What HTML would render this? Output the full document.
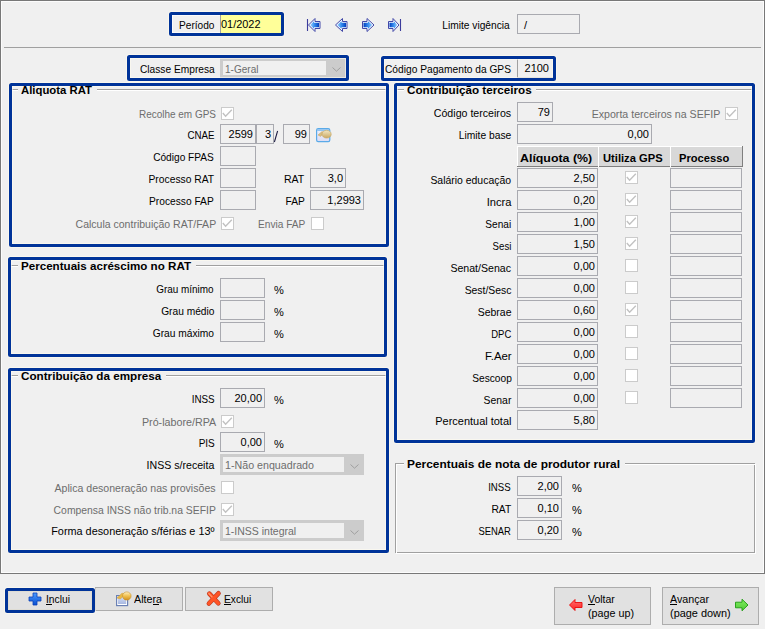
<!DOCTYPE html><html><head><meta charset="utf-8"><style>
html,body{margin:0;padding:0}
body{width:765px;height:629px;background:#f0f0f0;position:relative;overflow:hidden;font-family:"Liberation Sans",sans-serif;font-size:11px}
.a{position:absolute;box-sizing:border-box}
.t{position:absolute;font-size:11px;line-height:13px;white-space:nowrap;color:#000}
.b{font-weight:bold}
.f{position:absolute;box-sizing:border-box;border:1px solid #a9aab0;background:#f0f0f0}
.cb{position:absolute;box-sizing:border-box;width:13px;height:13px;border:1px solid #cbcbcb;background:#fff}
.bl{position:absolute;box-sizing:border-box;border:3px solid #003399;border-radius:2.5px;box-shadow:inset 0 0 0 1px rgba(255,252,238,0.6),0 0 0 1px rgba(255,252,238,0.6)}
.cmb{position:absolute;box-sizing:border-box;background:#cccccc}
.btn{position:absolute;box-sizing:border-box;border:1px solid #adadad;background:#e1e1e1}
</style></head><body>
<div class="a" style="left:0;top:0;width:765px;height:574px;border:1px solid #787878;box-shadow:inset 0 0 0 1px #fcfcfc"></div>
<div class="a" style="left:4px;top:47px;width:757px;height:1px;background:#a0a0a0"></div>
<div class="a" style="left:172px;top:15px;width:48px;height:1px;background:rgba(255,255,255,0.7)"></div>
<div class="a" style="left:172px;top:32px;width:48px;height:1px;background:rgba(255,255,255,0.7)"></div>
<div class="a" style="left:172px;top:15px;width:1px;height:18px;background:rgba(255,255,255,0.7)"></div>
<div class="t" style="top:19px;color:#000;left:178.50px;transform-origin:0 0;transform:scaleX(0.9213);">Período</div>
<div class="a" style="left:220px;top:15px;width:61px;height:18px;background:#ffff99;border-left:1px solid #a0a0a0"></div>
<div class="t" style="top:18px;color:#000;left:221.00px;transform-origin:0 0;transform:scaleX(0.9933);">01/2022</div>
<svg class="a" style="left:0;top:0" width="420" height="40">
<defs><linearGradient id="nl" x1="0" y1="0" x2="1" y2="0"><stop offset="0" stop-color="#9fd4ff"/><stop offset="0.45" stop-color="#3a90f0"/><stop offset="1" stop-color="#0040c0"/></linearGradient>
<linearGradient id="nr" x1="1" y1="0" x2="0" y2="0"><stop offset="0" stop-color="#9fd4ff"/><stop offset="0.45" stop-color="#3a90f0"/><stop offset="1" stop-color="#0040c0"/></linearGradient></defs>
<g stroke="#4248a8" stroke-width="1" fill="#f4f8ff" stroke-linejoin="round">
<path d="M308.5 25 L315 18.5 L315 21.5 L320 21.5 L320 28.5 L315 28.5 L315 31.5 Z"/>
<path d="M335.5 25 L342.5 18.5 L342.5 21.5 L347 21.5 L347 28.5 L342.5 28.5 L342.5 31.5 Z"/>
<path d="M374 25 L367 18.5 L367 21.5 L362.5 21.5 L362.5 28.5 L367 28.5 L367 31.5 Z"/>
<path d="M399 25 L393 18.5 L393 21.5 L388.5 21.5 L388.5 28.5 L393 28.5 L393 31.5 Z"/>
</g>
<g stroke="none">
<path fill="url(#nl)" d="M310.2 25 L314 21.3 L314 22.8 L319 22.8 L319 27.2 L314 27.2 L314 28.7 Z"/>
<path fill="url(#nl)" d="M337.2 25 L341.5 21.3 L341.5 22.8 L346 22.8 L346 27.2 L341.5 27.2 L341.5 28.7 Z"/>
<path fill="url(#nr)" d="M372.3 25 L368 21.3 L368 22.8 L363.5 22.8 L363.5 27.2 L368 27.2 L368 28.7 Z"/>
<path fill="url(#nr)" d="M397.3 25 L394 21.3 L394 22.8 L389.5 22.8 L389.5 27.2 L394 27.2 L394 28.7 Z"/>
</g>
<path d="M307.5 19 V31 M400.5 19 V31" stroke="#3c3c9c" stroke-width="1.1"/>
</svg>
<div class="t" style="top:19px;color:#000;right:255.00px;transform-origin:100% 0;transform:scaleX(0.9276);">Limite vigência</div>
<div class="f" style="left:517px;top:14px;width:63px;height:20px;"></div>
<div class="t" style="top:19px;color:#000;left:524.00px;transform-origin:0 0;">/</div>
<div class="t" style="top:63px;color:#000;right:550.70px;transform-origin:100% 0;transform:scaleX(0.9256);">Classe Empresa</div>
<div class="cmb" style="left:220px;top:58px;width:126px;height:20px"></div>
<div class="a" style="left:223px;top:61px;width:103px;height:14px;background:#f0f0f0"></div>
<div class="t" style="top:63px;color:#6d6d6d;left:225.00px;transform-origin:0 0;transform:scaleX(0.9131);">1-Geral</div>
<svg class="a" style="left:331px;top:66px" width="11" height="7"><path d="M1.5 1.5 L5.5 5.2 L9.5 1.5" stroke="#a0a0a0" stroke-width="1" fill="none"/></svg>
<div class="t" style="top:63px;color:#000;left:385.00px;transform-origin:0 0;transform:scaleX(0.9281);">Código Pagamento da GPS</div>
<div class="a" style="left:517px;top:59px;width:36px;height:19px;border-left:1px solid #a0a0a0;border-bottom:1px solid #c0c0c0"></div>
<div class="t" style="top:62px;color:#000;right:216.00px;transform-origin:100% 0;">2100</div>
<div class="a" style="left:12px;top:89px;width:6px;height:1px;background:#a0a0a0"></div>
<div class="a" style="left:12px;top:90px;width:6px;height:1px;background:#ffffff"></div>
<div class="a" style="left:97px;top:89px;width:289px;height:1px;background:#a0a0a0"></div>
<div class="a" style="left:97px;top:90px;width:289px;height:1px;background:#ffffff"></div>
<div class="t" style="top:108px;color:#6d6d6d;right:549.00px;transform-origin:100% 0;transform:scaleX(0.9060);">Recolhe em GPS</div>
<div class="cb" style="left:221px;top:107px"></div>
<svg class="a" style="left:221px;top:107px" width="13" height="13"><path d="M1.8 6 L4.6 9.2 L10.8 2.8" stroke="#c2c2c2" stroke-width="1.4" fill="none"/></svg>
<div class="t" style="top:129px;color:#000;right:550.50px;transform-origin:100% 0;transform:scaleX(0.8834);">CNAE</div>
<div class="f" style="left:220px;top:124px;width:36px;height:20px;"></div>
<div class="t" style="top:128px;color:#000;right:512.00px;transform-origin:100% 0;">2599</div>
<div class="f" style="left:256px;top:124px;width:18px;height:20px;"></div>
<div class="t" style="top:128px;color:#000;right:494.00px;transform-origin:100% 0;">3</div>
<svg class="a" style="left:270px;top:126px" width="14" height="20"><path d="M7.6 5 L4.4 16" stroke="#1a1a40" stroke-width="1.05"/></svg>
<div class="f" style="left:283px;top:124px;width:27px;height:20px;"></div>
<div class="t" style="top:128px;color:#000;right:458.00px;transform-origin:100% 0;">99</div>
<svg class="a" style="left:310px;top:122px" width="26" height="24">
<defs><linearGradient id="wg" x1="0" y1="0" x2="0" y2="1"><stop offset="0" stop-color="#f0f2fc"/><stop offset="1" stop-color="#dcdcf4"/></linearGradient>
<linearGradient id="hg" x1="0" y1="0" x2="0" y2="1"><stop offset="0" stop-color="#f2e6c4"/><stop offset="1" stop-color="#caa860"/></linearGradient></defs>
<rect x="6.6" y="6.6" width="13.2" height="13" rx="1.6" fill="url(#wg)" stroke="#5aaae8" stroke-width="1.2"/>
<rect x="7.2" y="7.4" width="12" height="1.4" fill="#7ab8ee"/>
<path d="M8 13 L12 9.6 L14 10.4 L10.6 14.4 Z" fill="#d8bd82" stroke="#c4a460" stroke-width="0.5"/>
<ellipse cx="16.6" cy="12.2" rx="4.6" ry="3.9" fill="url(#hg)" stroke="#c8a45c" stroke-width="0.6"/>
</svg>
<div class="t" style="top:151px;color:#000;right:551.00px;transform-origin:100% 0;transform:scaleX(0.9221);">Código FPAS</div>
<div class="f" style="left:220px;top:146px;width:36px;height:20px;"></div>
<div class="t" style="top:173px;color:#000;right:551.00px;transform-origin:100% 0;transform:scaleX(0.9359);">Processo RAT</div>
<div class="f" style="left:220px;top:168px;width:36px;height:20px;"></div>
<div class="t" style="top:173px;color:#000;right:460.40px;transform-origin:100% 0;transform:scaleX(0.9581);">RAT</div>
<div class="f" style="left:310px;top:168px;width:36px;height:20px;"></div>
<div class="t" style="top:172px;color:#000;right:422.00px;transform-origin:100% 0;">3,0</div>
<div class="t" style="top:195px;color:#000;right:551.00px;transform-origin:100% 0;transform:scaleX(0.9282);">Processo FAP</div>
<div class="f" style="left:220px;top:190px;width:36px;height:20px;"></div>
<div class="t" style="top:195px;color:#000;right:460.40px;transform-origin:100% 0;transform:scaleX(0.9280);">FAP</div>
<div class="f" style="left:310px;top:190px;width:54px;height:20px;"></div>
<div class="t" style="top:194px;color:#000;right:404.00px;transform-origin:100% 0;">1,2993</div>
<div class="t" style="top:218px;color:#6d6d6d;right:548.80px;transform-origin:100% 0;transform:scaleX(0.9555);">Calcula contribuição RAT/FAP</div>
<div class="cb" style="left:221px;top:217px"></div>
<svg class="a" style="left:221px;top:217px" width="13" height="13"><path d="M1.8 6 L4.6 9.2 L10.8 2.8" stroke="#c2c2c2" stroke-width="1.4" fill="none"/></svg>
<div class="t" style="top:218px;color:#6d6d6d;right:459.20px;transform-origin:100% 0;transform:scaleX(0.9210);">Envia FAP</div>
<div class="cb" style="left:311px;top:217px"></div>
<div class="a" style="left:11px;top:265px;width:7px;height:1px;background:#a0a0a0"></div>
<div class="a" style="left:11px;top:266px;width:7px;height:1px;background:#ffffff"></div>
<div class="a" style="left:196px;top:265px;width:188px;height:1px;background:#a0a0a0"></div>
<div class="a" style="left:196px;top:266px;width:188px;height:1px;background:#ffffff"></div>
<div class="t" style="top:283px;color:#000;right:551.00px;transform-origin:100% 0;transform:scaleX(0.9013);">Grau mínimo</div>
<div class="f" style="left:220px;top:278px;width:45px;height:20px;"></div>
<div class="t" style="top:284px;color:#000;left:274.30px;transform-origin:0 0;transform:scaleX(1.0019);">%</div>
<div class="t" style="top:305px;color:#000;right:551.00px;transform-origin:100% 0;transform:scaleX(0.9272);">Grau médio</div>
<div class="f" style="left:220px;top:300px;width:45px;height:20px;"></div>
<div class="t" style="top:306px;color:#000;left:274.30px;transform-origin:0 0;transform:scaleX(1.0019);">%</div>
<div class="t" style="top:327px;color:#000;right:551.00px;transform-origin:100% 0;transform:scaleX(0.9283);">Grau máximo</div>
<div class="f" style="left:220px;top:322px;width:45px;height:20px;"></div>
<div class="t" style="top:328px;color:#000;left:274.30px;transform-origin:0 0;transform:scaleX(1.0019);">%</div>
<div class="a" style="left:11px;top:375px;width:7px;height:1px;background:#a0a0a0"></div>
<div class="a" style="left:11px;top:376px;width:7px;height:1px;background:#ffffff"></div>
<div class="a" style="left:166px;top:375px;width:220px;height:1px;background:#a0a0a0"></div>
<div class="a" style="left:166px;top:376px;width:220px;height:1px;background:#ffffff"></div>
<div class="t" style="top:393px;color:#000;right:550.70px;transform-origin:100% 0;transform:scaleX(0.8954);">INSS</div>
<div class="f" style="left:220px;top:388px;width:45px;height:20px;"></div>
<div class="t" style="top:392px;color:#000;right:503.00px;transform-origin:100% 0;">20,00</div>
<div class="t" style="top:394px;color:#000;left:274.30px;transform-origin:0 0;transform:scaleX(1.0019);">%</div>
<div class="t" style="top:416px;color:#6d6d6d;right:548.60px;transform-origin:100% 0;transform:scaleX(0.9748);">Pró-labore/RPA</div>
<div class="cb" style="left:221px;top:415px"></div>
<svg class="a" style="left:221px;top:415px" width="13" height="13"><path d="M1.8 6 L4.6 9.2 L10.8 2.8" stroke="#c2c2c2" stroke-width="1.4" fill="none"/></svg>
<div class="t" style="top:437px;color:#000;right:550.70px;transform-origin:100% 0;transform:scaleX(0.9078);">PIS</div>
<div class="f" style="left:220px;top:432px;width:45px;height:20px;"></div>
<div class="t" style="top:436px;color:#000;right:503.00px;transform-origin:100% 0;">0,00</div>
<div class="t" style="top:438px;color:#000;left:274.30px;transform-origin:0 0;transform:scaleX(1.0019);">%</div>
<div class="t" style="top:459px;color:#000;right:550.90px;transform-origin:100% 0;transform:scaleX(0.9628);">INSS s/receita</div>
<div class="cmb" style="left:220px;top:454px;width:144px;height:21px"></div>
<div class="a" style="left:223px;top:457px;width:121px;height:15px;background:#f0f0f0"></div>
<div class="t" style="top:459px;color:#6d6d6d;left:225.00px;transform-origin:0 0;transform:scaleX(0.9700);">1-Não enquadrado</div>
<svg class="a" style="left:349px;top:463px" width="11" height="7"><path d="M1.5 1.5 L5.5 5.2 L9.5 1.5" stroke="#a0a0a0" stroke-width="1" fill="none"/></svg>
<div class="t" style="top:482px;color:#6d6d6d;right:549.00px;transform-origin:100% 0;transform:scaleX(0.9609);">Aplica desoneração nas provisões</div>
<div class="cb" style="left:221px;top:481px"></div>
<div class="t" style="top:504px;color:#6d6d6d;right:549.00px;transform-origin:100% 0;transform:scaleX(0.9441);">Compensa INSS não trib.na SEFIP</div>
<div class="cb" style="left:221px;top:503px"></div>
<svg class="a" style="left:221px;top:503px" width="13" height="13"><path d="M1.8 6 L4.6 9.2 L10.8 2.8" stroke="#c2c2c2" stroke-width="1.4" fill="none"/></svg>
<div class="t" style="top:525px;color:#000;right:550.40px;transform-origin:100% 0;transform:scaleX(0.9865);">Forma desoneração s/férias e 13º</div>
<div class="cmb" style="left:220px;top:520px;width:144px;height:21px"></div>
<div class="a" style="left:223px;top:523px;width:121px;height:15px;background:#f0f0f0"></div>
<div class="t" style="top:525px;color:#6d6d6d;left:225.00px;transform-origin:0 0;transform:scaleX(0.9545);">1-INSS integral</div>
<svg class="a" style="left:349px;top:529px" width="11" height="7"><path d="M1.5 1.5 L5.5 5.2 L9.5 1.5" stroke="#a0a0a0" stroke-width="1" fill="none"/></svg>
<div class="a" style="left:397px;top:89px;width:7px;height:1px;background:#a0a0a0"></div>
<div class="a" style="left:397px;top:90px;width:7px;height:1px;background:#ffffff"></div>
<div class="a" style="left:536px;top:89px;width:216px;height:1px;background:#a0a0a0"></div>
<div class="a" style="left:536px;top:90px;width:216px;height:1px;background:#ffffff"></div>
<div class="t" style="top:107px;color:#000;right:254.00px;transform-origin:100% 0;transform:scaleX(0.9651);">Código terceiros</div>
<div class="f" style="left:517px;top:102px;width:36px;height:20px;"></div>
<div class="t" style="top:106px;color:#000;right:215.00px;transform-origin:100% 0;">79</div>
<div class="t" style="top:108px;color:#6d6d6d;right:45.10px;transform-origin:100% 0;transform:scaleX(0.9649);">Exporta terceiros na SEFIP</div>
<div class="cb" style="left:725px;top:107px"></div>
<svg class="a" style="left:725px;top:107px" width="13" height="13"><path d="M1.8 6 L4.6 9.2 L10.8 2.8" stroke="#c2c2c2" stroke-width="1.4" fill="none"/></svg>
<div class="t" style="top:129px;color:#000;right:254.00px;transform-origin:100% 0;transform:scaleX(0.9349);">Limite base</div>
<div class="f" style="left:517px;top:124px;width:135px;height:20px;"></div>
<div class="t" style="top:128px;color:#000;right:116.00px;transform-origin:100% 0;">0,00</div>
<div class="a" style="left:517px;top:146px;width:226px;height:1px;background:#ffffff"></div>
<div class="a" style="left:517px;top:147px;width:81px;height:19px;background:#d8d8d8;border-left:1px solid #fff"></div>
<div class="t" style="top:152px;color:#000;font-weight:bold;left:520.00px;transform-origin:0 0;transform:scaleX(1.1251);">Alíquota (%)</div>
<div class="a" style="left:598px;top:147px;width:72px;height:19px;background:#d8d8d8;border-left:1px solid #fff"></div>
<div class="t" style="top:152px;color:#000;font-weight:bold;left:603.40px;transform-origin:0 0;transform:scaleX(1.0155);">Utiliza GPS</div>
<div class="a" style="left:670px;top:147px;width:72px;height:19px;background:#d8d8d8;border-left:1px solid #fff"></div>
<div class="t" style="top:152px;color:#000;font-weight:bold;left:679.30px;transform-origin:0 0;transform:scaleX(1.0135);">Processo</div>
<div class="a" style="left:742px;top:146px;width:1px;height:21px;background:#7f7f7f"></div>
<div class="a" style="left:517px;top:166px;width:226px;height:1px;background:#7f7f7f"></div>
<div class="a" style="left:598px;top:146px;width:1px;height:21px;background:#ffffff"></div>
<div class="a" style="left:670px;top:146px;width:1px;height:21px;background:#ffffff"></div>
<div class="t" style="top:174px;color:#000;right:253.70px;transform-origin:100% 0;transform:scaleX(0.9481);">Salário educação</div>
<div class="f" style="left:517px;top:168px;width:81px;height:20px;"></div>
<div class="t" style="top:172px;color:#000;right:170.00px;transform-origin:100% 0;">2,50</div>
<div class="cb" style="left:625px;top:171px"></div>
<svg class="a" style="left:625px;top:171px" width="13" height="13"><path d="M1.8 6 L4.6 9.2 L10.8 2.8" stroke="#c2c2c2" stroke-width="1.4" fill="none"/></svg>
<div class="f" style="left:670px;top:168px;width:72px;height:20px;"></div>
<div class="t" style="top:196px;color:#000;right:253.70px;transform-origin:100% 0;transform:scaleX(1.0135);">Incra</div>
<div class="f" style="left:517px;top:190px;width:81px;height:20px;"></div>
<div class="t" style="top:194px;color:#000;right:170.00px;transform-origin:100% 0;">0,20</div>
<div class="cb" style="left:625px;top:193px"></div>
<svg class="a" style="left:625px;top:193px" width="13" height="13"><path d="M1.8 6 L4.6 9.2 L10.8 2.8" stroke="#c2c2c2" stroke-width="1.4" fill="none"/></svg>
<div class="f" style="left:670px;top:190px;width:72px;height:20px;"></div>
<div class="t" style="top:218px;color:#000;right:253.70px;transform-origin:100% 0;transform:scaleX(0.9168);">Senai</div>
<div class="f" style="left:517px;top:212px;width:81px;height:20px;"></div>
<div class="t" style="top:216px;color:#000;right:170.00px;transform-origin:100% 0;">1,00</div>
<div class="cb" style="left:625px;top:215px"></div>
<svg class="a" style="left:625px;top:215px" width="13" height="13"><path d="M1.8 6 L4.6 9.2 L10.8 2.8" stroke="#c2c2c2" stroke-width="1.4" fill="none"/></svg>
<div class="f" style="left:670px;top:212px;width:72px;height:20px;"></div>
<div class="t" style="top:240px;color:#000;right:253.70px;transform-origin:100% 0;transform:scaleX(0.8782);">Sesi</div>
<div class="f" style="left:517px;top:234px;width:81px;height:20px;"></div>
<div class="t" style="top:238px;color:#000;right:170.00px;transform-origin:100% 0;">1,50</div>
<div class="cb" style="left:625px;top:237px"></div>
<svg class="a" style="left:625px;top:237px" width="13" height="13"><path d="M1.8 6 L4.6 9.2 L10.8 2.8" stroke="#c2c2c2" stroke-width="1.4" fill="none"/></svg>
<div class="f" style="left:670px;top:234px;width:72px;height:20px;"></div>
<div class="t" style="top:262px;color:#000;right:253.70px;transform-origin:100% 0;transform:scaleX(0.9619);">Senat/Senac</div>
<div class="f" style="left:517px;top:256px;width:81px;height:20px;"></div>
<div class="t" style="top:260px;color:#000;right:170.00px;transform-origin:100% 0;">0,00</div>
<div class="cb" style="left:625px;top:259px"></div>
<div class="f" style="left:670px;top:256px;width:72px;height:20px;"></div>
<div class="t" style="top:284px;color:#000;right:253.70px;transform-origin:100% 0;transform:scaleX(0.9469);">Sest/Sesc</div>
<div class="f" style="left:517px;top:278px;width:81px;height:20px;"></div>
<div class="t" style="top:282px;color:#000;right:170.00px;transform-origin:100% 0;">0,00</div>
<div class="cb" style="left:625px;top:281px"></div>
<div class="f" style="left:670px;top:278px;width:72px;height:20px;"></div>
<div class="t" style="top:306px;color:#000;right:253.70px;transform-origin:100% 0;transform:scaleX(0.9525);">Sebrae</div>
<div class="f" style="left:517px;top:300px;width:81px;height:20px;"></div>
<div class="t" style="top:304px;color:#000;right:170.00px;transform-origin:100% 0;">0,60</div>
<div class="cb" style="left:625px;top:303px"></div>
<svg class="a" style="left:625px;top:303px" width="13" height="13"><path d="M1.8 6 L4.6 9.2 L10.8 2.8" stroke="#c2c2c2" stroke-width="1.4" fill="none"/></svg>
<div class="f" style="left:670px;top:300px;width:72px;height:20px;"></div>
<div class="t" style="top:328px;color:#000;right:253.70px;transform-origin:100% 0;transform:scaleX(0.8608);">DPC</div>
<div class="f" style="left:517px;top:322px;width:81px;height:20px;"></div>
<div class="t" style="top:326px;color:#000;right:170.00px;transform-origin:100% 0;">0,00</div>
<div class="cb" style="left:625px;top:325px"></div>
<div class="f" style="left:670px;top:322px;width:72px;height:20px;"></div>
<div class="t" style="top:350px;color:#000;right:253.70px;transform-origin:100% 0;transform:scaleX(1.0394);">F.Aer</div>
<div class="f" style="left:517px;top:344px;width:81px;height:20px;"></div>
<div class="t" style="top:348px;color:#000;right:170.00px;transform-origin:100% 0;">0,00</div>
<div class="cb" style="left:625px;top:347px"></div>
<div class="f" style="left:670px;top:344px;width:72px;height:20px;"></div>
<div class="t" style="top:372px;color:#000;right:253.70px;transform-origin:100% 0;transform:scaleX(0.9250);">Sescoop</div>
<div class="f" style="left:517px;top:366px;width:81px;height:20px;"></div>
<div class="t" style="top:370px;color:#000;right:170.00px;transform-origin:100% 0;">0,00</div>
<div class="cb" style="left:625px;top:369px"></div>
<div class="f" style="left:670px;top:366px;width:72px;height:20px;"></div>
<div class="t" style="top:394px;color:#000;right:253.70px;transform-origin:100% 0;transform:scaleX(0.9469);">Senar</div>
<div class="f" style="left:517px;top:388px;width:81px;height:20px;"></div>
<div class="t" style="top:392px;color:#000;right:170.00px;transform-origin:100% 0;">0,00</div>
<div class="cb" style="left:625px;top:391px"></div>
<div class="f" style="left:670px;top:388px;width:72px;height:20px;"></div>
<div class="t" style="top:415px;color:#000;right:253.70px;transform-origin:100% 0;transform:scaleX(0.9969);">Percentual total</div>
<div class="f" style="left:517px;top:410px;width:81px;height:20px;"></div>
<div class="t" style="top:414px;color:#000;right:170.00px;transform-origin:100% 0;">5,80</div>
<div class="a" style="left:395px;top:463px;width:1px;height:90px;background:#a0a0a0"></div>
<div class="a" style="left:754px;top:463px;width:1px;height:90px;background:#a0a0a0"></div>
<div class="a" style="left:395px;top:552px;width:360px;height:1px;background:#a0a0a0"></div>
<div class="a" style="left:395px;top:463px;width:9px;height:1px;background:#a0a0a0"></div>
<div class="a" style="left:625px;top:463px;width:130px;height:1px;background:#a0a0a0"></div>
<div class="a" style="left:396px;top:464px;width:1px;height:90px;background:#fff"></div>
<div class="a" style="left:755px;top:464px;width:1px;height:90px;background:#fff"></div>
<div class="a" style="left:396px;top:553px;width:360px;height:1px;background:#fff"></div>
<div class="a" style="left:396px;top:464px;width:8px;height:1px;background:#fff"></div>
<div class="a" style="left:625px;top:464px;width:131px;height:1px;background:#fff"></div>
<div class="t" style="top:458px;color:#000;font-weight:bold;left:407.00px;transform-origin:0 0;transform:scaleX(1.0822);">Percentuais de nota de produtor rural</div>
<div class="t" style="top:481px;color:#000;right:254.00px;transform-origin:100% 0;transform:scaleX(0.8759);">INSS</div>
<div class="f" style="left:517px;top:476px;width:45px;height:20px;"></div>
<div class="t" style="top:480px;color:#000;right:206.00px;transform-origin:100% 0;">2,00</div>
<div class="t" style="top:482px;color:#000;left:571.60px;transform-origin:0 0;transform:scaleX(1.0019);">%</div>
<div class="t" style="top:503px;color:#000;right:254.00px;transform-origin:100% 0;transform:scaleX(0.9345);">RAT</div>
<div class="f" style="left:517px;top:498px;width:45px;height:20px;"></div>
<div class="t" style="top:502px;color:#000;right:206.00px;transform-origin:100% 0;">0,10</div>
<div class="t" style="top:504px;color:#000;left:571.60px;transform-origin:0 0;transform:scaleX(1.0019);">%</div>
<div class="t" style="top:525px;color:#000;right:254.00px;transform-origin:100% 0;transform:scaleX(0.8574);">SENAR</div>
<div class="f" style="left:517px;top:520px;width:45px;height:20px;"></div>
<div class="t" style="top:524px;color:#000;right:206.00px;transform-origin:100% 0;">0,20</div>
<div class="t" style="top:526px;color:#000;left:571.60px;transform-origin:0 0;transform:scaleX(1.0019);">%</div>
<div class="btn" style="left:8px;top:591px;width:84px;height:19px"></div>
<svg class="a" style="left:28px;top:592px" width="14" height="14"><defs><linearGradient id="pg" x1="0" y1="0" x2="0" y2="1"><stop offset="0" stop-color="#4a9cff"/><stop offset="1" stop-color="#0a4ed0"/></linearGradient></defs>
<path d="M5 1 H9 V5 H13 V9 H9 V13 H5 V9 H1 V5 H5 Z" fill="url(#pg)" stroke="#0a40b8" stroke-width="0.8"/></svg>
<div class="t" style="top:593px;color:#000;left:46.00px;transform-origin:0 0;transform:scaleX(0.9343);">Inclui</div>
<div class="a" style="left:46px;top:604px;width:6px;height:1px;background:#000"></div>
<div class="btn" style="left:95px;top:587px;width:88px;height:24px"></div>
<svg class="a" style="left:110px;top:586px" width="26" height="24"><defs><linearGradient id="hg2" x1="0" y1="0" x2="0" y2="1"><stop offset="0" stop-color="#fff0c0"/><stop offset="0.5" stop-color="#f0c050"/><stop offset="1" stop-color="#d09020"/></linearGradient>
<linearGradient id="wg2" x1="0" y1="0" x2="0" y2="1"><stop offset="0" stop-color="#cfdaf4"/><stop offset="1" stop-color="#a8b8e0"/></linearGradient></defs>
<rect x="6.6" y="9.6" width="11" height="10" fill="#ffffff" stroke="#6a80b4" stroke-width="1.2"/>
<rect x="8" y="11.2" width="8.2" height="6.8" fill="url(#wg2)"/>
<path d="M7 12 L12 7.2 L15 8 L10.4 13 Z" fill="#e8b848" stroke="#d09a30" stroke-width="0.5"/>
<ellipse cx="16.8" cy="10" rx="4.3" ry="4.1" fill="url(#hg2)" stroke="#c89028" stroke-width="0.6"/>
</svg>
<div class="t" style="top:593px;color:#000;left:133.80px;transform-origin:0 0;transform:scaleX(0.9774);">Altera</div>
<div class="a" style="left:153px;top:604px;width:6px;height:1px;background:#000"></div>
<div class="btn" style="left:185px;top:587px;width:88px;height:24px"></div>
<svg class="a" style="left:200px;top:586px" width="26" height="24">
<path d="M9.3 7.6 L18.3 17.3 M18.5 7.3 L8.9 17.5" stroke="#b8280c" stroke-width="4.6" stroke-linecap="round" opacity="0.9"/>
<path d="M9.3 7.6 L18.3 17.3 M18.5 7.3 L8.9 17.5" stroke="#ff5426" stroke-width="3.4" stroke-linecap="round"/>
<path d="M8.8 7.4 L12 10.8" stroke="#ff9a70" stroke-width="1.2" stroke-linecap="round"/>
</svg>
<div class="t" style="top:593px;color:#000;left:224.40px;transform-origin:0 0;transform:scaleX(0.9269);">Exclui</div>
<div class="a" style="left:224px;top:604px;width:7px;height:1px;background:#000"></div>
<div class="btn" style="left:554px;top:587px;width:97px;height:38px"></div>
<svg class="a" style="left:568px;top:598px" width="16" height="14"><defs><linearGradient id="rg" x1="0" y1="0" x2="0" y2="1"><stop offset="0" stop-color="#ff7070"/><stop offset="1" stop-color="#ff2020"/></linearGradient></defs>
<path d="M1.5 7 L7 1.5 L7 4.5 L14 4.5 L14 9.5 L7 9.5 L7 12.5 Z" fill="url(#rg)" stroke="#e80808" stroke-width="0.9"/></svg>
<div class="t" style="top:593px;color:#000;left:587.70px;transform-origin:0 0;transform:scaleX(0.9524);">Voltar</div>
<div class="a" style="left:588px;top:604px;width:7px;height:1px;background:#000"></div>
<div class="t" style="top:607px;color:#000;left:587.70px;transform-origin:0 0;transform:scaleX(0.9768);">(page up)</div>
<div class="btn" style="left:662px;top:587px;width:97px;height:38px"></div>
<svg class="a" style="left:734px;top:598px" width="16" height="14"><defs><linearGradient id="gg" x1="0" y1="0" x2="0" y2="1"><stop offset="0" stop-color="#80ee60"/><stop offset="1" stop-color="#50c838"/></linearGradient></defs>
<path d="M14 7 L8 1.2 L8 4.2 L1.5 4.2 L1.5 9.8 L8 9.8 L8 12.8 Z" fill="url(#gg)" stroke="#1c9a10" stroke-width="0.9"/></svg>
<div class="t" style="top:593px;color:#000;left:669.80px;transform-origin:0 0;transform:scaleX(0.9737);">Avançar</div>
<div class="a" style="left:670px;top:604px;width:7px;height:1px;background:#000"></div>
<div class="t" style="top:607px;color:#000;left:669.80px;transform-origin:0 0;transform:scaleX(0.9925);">(page down)</div>
<div class="bl" style="left:169px;top:12px;width:115px;height:24px;box-shadow:0 0 0 1px rgba(255,252,238,0.6);"></div>
<div class="bl" style="left:127px;top:55px;width:222px;height:26px;"></div>
<div class="bl" style="left:381px;top:56px;width:175px;height:25px;"></div>
<div class="bl" style="left:9px;top:83px;width:380px;height:164px;"></div>
<div class="bl" style="left:8px;top:257px;width:379px;height:100px;"></div>
<div class="bl" style="left:8px;top:368px;width:381px;height:185px;"></div>
<div class="bl" style="left:394px;top:83px;width:361px;height:360px;"></div>
<div class="bl" style="left:5px;top:588px;width:90px;height:25px;"></div>
<div class="t" style="top:84px;color:#000;font-weight:bold;left:21.00px;transform-origin:0 0;transform:scaleX(1.0313);">Aliquota RAT</div>
<div class="t" style="top:260px;color:#000;font-weight:bold;left:21.00px;transform-origin:0 0;transform:scaleX(1.0547);">Percentuais acréscimo no RAT</div>
<div class="t" style="top:370px;color:#000;font-weight:bold;left:21.00px;transform-origin:0 0;transform:scaleX(1.0617);">Contribuição da empresa</div>
<div class="t" style="top:84px;color:#000;font-weight:bold;left:407.00px;transform-origin:0 0;transform:scaleX(1.0625);">Contribuição terceiros</div>
</body></html>
